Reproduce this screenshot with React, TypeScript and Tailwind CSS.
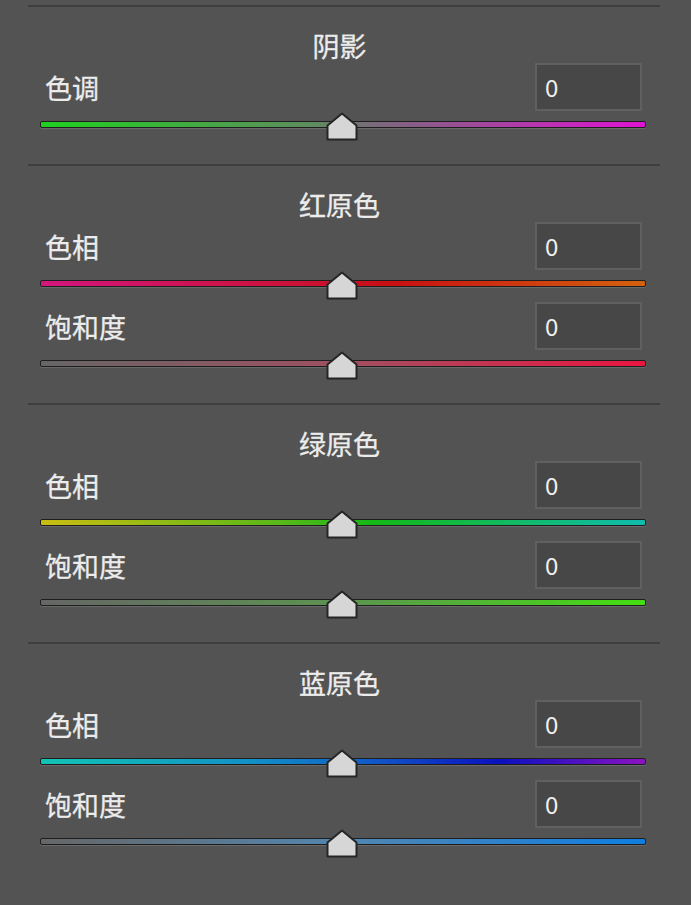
const font = { fontFamily: '"Noto Sans CJK SC", "Noto Sans", sans-serif' };

type Row = { label: string; track: string };
type Section = { title: string; rows: Row[] };

const sections: Section[] = [
  {
    title: "阴影",
    rows: [
      { label: "色调", track: "bg-[linear-gradient(to_right,#1fd11f,#5e8c5e_45%,#7a6a7a_55%,#e012d4)]" },
    ],
  },
  {
    title: "红原色",
    rows: [
      { label: "色相", track: "bg-[linear-gradient(to_right,#d2167e,#cc1238_42%,#c80f12_58%,#d4620e)]" },
      { label: "饱和度", track: "bg-[linear-gradient(to_right,#666666,#a05062_50%,#ea1640)]" },
    ],
  },
  {
    title: "绿原色",
    rows: [
      { label: "色相", track: "bg-[linear-gradient(to_right,#cabd12,#58b81a_40%,#14b816_55%,#10bcae)]" },
      { label: "饱和度", track: "bg-[linear-gradient(to_right,#666666,#5c9450_50%,#44de12)]" },
    ],
  },
  {
    title: "蓝原色",
    rows: [
      { label: "色相", track: "bg-[linear-gradient(to_right,#12c4b4,#1290c6_35%,#1262c8_52%,#0a10c0_76%,#8c12c2)]" },
      { label: "饱和度", track: "bg-[linear-gradient(to_right,#666666,#5286b0_50%,#0e7ee2)]" },
    ],
  },
];

function Thumb() {
  return (
    <svg
      width="32"
      height="29"
      viewBox="0 0 32 29"
      className="absolute left-1/2 -top-[9px] -ml-[17px]"
    >
      <path
        d="M16 1.5 L30.5 13.5 V27.5 H1.5 V13.5 Z"
        fill="#d6d6d6"
        stroke="#252525"
        strokeWidth="2"
        strokeLinejoin="round"
      />
    </svg>
  );
}

function SliderRow({ row }: { row: Row }) {
  return (
    <div className="flex flex-col">
      <div className="flex h-[48px] items-center justify-between pl-[45px] pr-[49px]">
        <span className="text-[27px] leading-none text-[#ececec] [-webkit-text-stroke:0.3px_#ececec]">
          {row.label}
        </span>
        <div className="flex h-[48px] w-[107px] items-center border-2 border-[#606060] bg-[#474747] pl-[8px]">
          <span className="text-[24px] leading-none text-[#f0f0f0]">0</span>
        </div>
      </div>
      <div className="relative mb-[15px] ml-[40px] mr-[45px] mt-[10px] h-[7px]">
        <div
          className={`h-full rounded-[2px] border border-[#1e1e1e] shadow-[0_1px_1px_#6c6c6c] ${row.track}`}
        />
        <Thumb />
      </div>
    </div>
  );
}

export default function App() {
  return (
    <div className="h-[905px] w-full overflow-hidden bg-[#535353] pt-[5px]" style={font}>
      {sections.map((s) => (
        <div key={s.title} className="flex flex-col">
          <div className="ml-[28px] mr-[31px] h-[2px] bg-[#3e3e3e]" />
          <div className="mb-[2px] mt-[22px] flex h-[32px] items-center justify-center pr-[12px] text-[27px] leading-none text-[#ececec] [-webkit-text-stroke:0.3px_#ececec]">
            {s.title}
          </div>
          {s.rows.map((r) => (
            <SliderRow key={r.label} row={r} />
          ))}
          <div className="h-[21px]" />
        </div>
      ))}
    </div>
  );
}
